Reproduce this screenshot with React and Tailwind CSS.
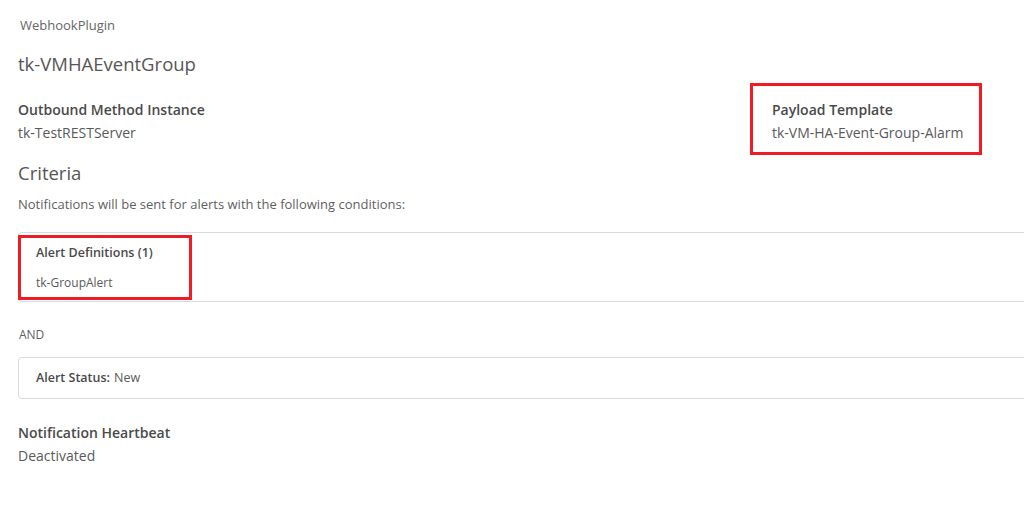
import React from 'react';

const font = { fontFamily: '"Open Sans", "Liberation Sans", sans-serif' };

const Field = ({ label, value }) => (
  <div>
    <div className="text-[14px] font-semibold text-[#4a4a4a] leading-[20px]">{label}</div>
    <div className="text-[14px] text-[#5a5a5a] leading-[20px] mt-[3px]">{value}</div>
  </div>
);

export default function App() {
  return (
    <div
      className="w-[1024px] h-[511px] overflow-hidden bg-white relative"
      style={font}
    >
      <div className="pl-[18px] pt-[16px]">
        <div className="pl-[2px] text-[13px] text-[#666] leading-[18px]">WebhookPlugin</div>

        <h1 className="mt-[18px] text-[18.5px] text-[#565656] leading-[24px]">tk-VMHAEventGroup</h1>

        {/* Outbound / Payload row */}
        <div className="flex items-start mt-[4px]">
          <div className="w-[732px] pt-[20px]">
            <Field label="Outbound Method Instance" value="tk-TestRESTServer" />
          </div>
          <div className="mt-[3px] w-[232px] h-[72px] border-[3px] border-[#ef1c24] pl-[19px] pt-[14px]">
            <Field label="Payload Template" value="tk-VM-HA-Event-Group-Alarm" />
          </div>
        </div>

        <h2 className="mt-[6px] text-[18.5px] text-[#565656] leading-[24px]">Criteria</h2>
        <p className="mt-[10px] text-[13px] text-[#5f5f5f] leading-[18px]">
          Notifications will be sent for alerts with the following conditions:
        </p>

        {/* Alert definitions box */}
        <div className="mt-[19px] w-[1020px] h-[70px] border border-[#d5dbe0] rounded-[4px] pt-[2px]">
          <div className="w-[174px] h-[65px] border-[3px] border-[#ef1c24] -ml-[1px] pl-[15px] pt-[6px]">
            <div className="text-[12.5px] font-semibold text-[#4a4a4a] leading-[18px]">Alert Definitions (1)</div>
            <div className="mt-[12px] text-[12px] text-[#5a5a5a] leading-[18px]">tk-GroupAlert</div>
          </div>
        </div>

        <div className="mt-[24px] pl-[1px] text-[12px] text-[#5f5f5f] leading-[18px]">AND</div>

        {/* Alert status box */}
        <div className="mt-[13px] w-[1020px] h-[42px] border border-[#d5dbe0] rounded-[4px] flex items-center pl-[17px]">
          <span className="text-[12.5px] font-semibold text-[#4a4a4a]">Alert Status:</span>
          <span className="ml-[4px] text-[12.5px] text-[#5a5a5a]">New</span>
        </div>

        <div className="mt-[24px]">
          <Field label="Notification Heartbeat" value="Deactivated" />
        </div>
      </div>
    </div>
  );
}
